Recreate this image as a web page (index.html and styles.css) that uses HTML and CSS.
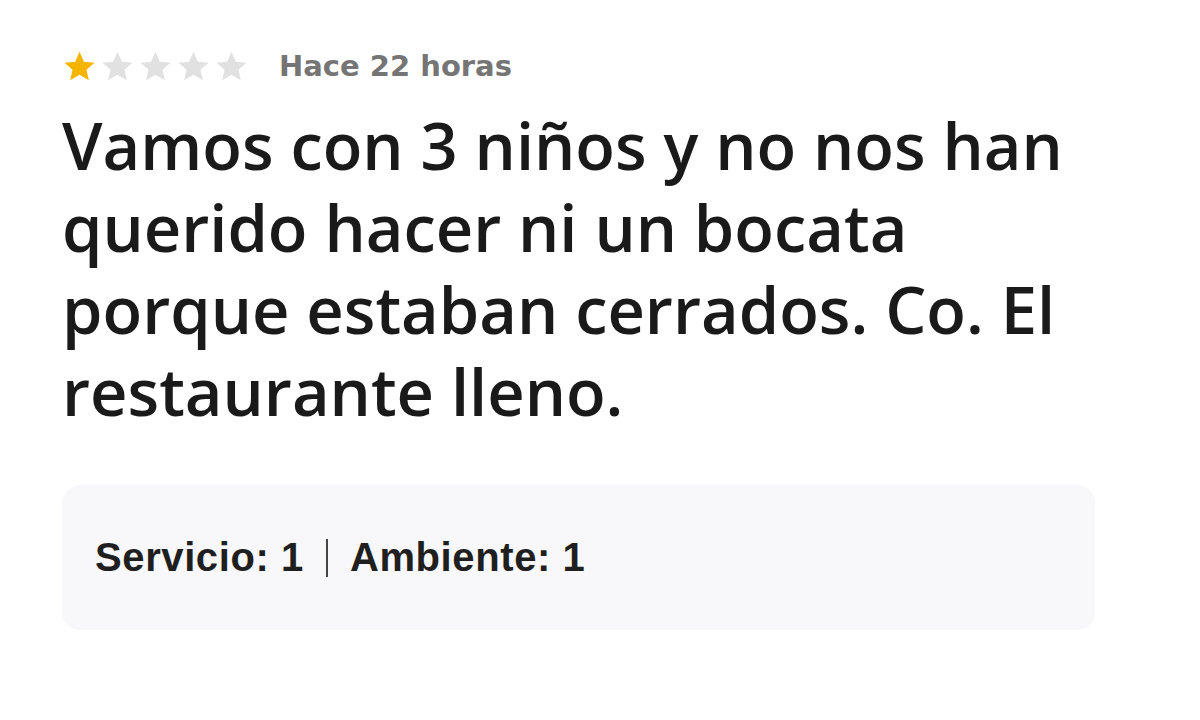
FILE: index.html
```html
<!DOCTYPE html>
<html lang="es">
<head>
  <meta charset="UTF-8">
  <meta name="viewport" content="width=device-width, initial-scale=1.0">
  <title>Reseña</title>
  <link rel="stylesheet" href="styles.css">
</head>
<body>
<div class="review">
  <div class="review-head">
    <div class="stars">
      <svg class="star on" viewBox="0 0 24 24"><path d="M12 1.8l3 6.9 7.3.7-5.5 4.9 1.6 7.2L12 17.7l-6.4 3.8 1.6-7.2-5.5-4.9 7.3-.7z"/></svg>
      <svg class="star" viewBox="0 0 24 24"><path d="M12 1.8l3 6.9 7.3.7-5.5 4.9 1.6 7.2L12 17.7l-6.4 3.8 1.6-7.2-5.5-4.9 7.3-.7z"/></svg>
      <svg class="star" viewBox="0 0 24 24"><path d="M12 1.8l3 6.9 7.3.7-5.5 4.9 1.6 7.2L12 17.7l-6.4 3.8 1.6-7.2-5.5-4.9 7.3-.7z"/></svg>
      <svg class="star" viewBox="0 0 24 24"><path d="M12 1.8l3 6.9 7.3.7-5.5 4.9 1.6 7.2L12 17.7l-6.4 3.8 1.6-7.2-5.5-4.9 7.3-.7z"/></svg>
      <svg class="star" viewBox="0 0 24 24"><path d="M12 1.8l3 6.9 7.3.7-5.5 4.9 1.6 7.2L12 17.7l-6.4 3.8 1.6-7.2-5.5-4.9 7.3-.7z"/></svg>
    </div>
    <span class="time">Hace 22 horas</span>
  </div>
  <p class="text">Vamos con 3 niños y no nos han querido hacer ni un bocata porque estaban cerrados. Co. El restaurante lleno.</p>
  <div class="ratings">
    <span>Servicio: 1</span>
    <span class="sep"></span>
    <span>Ambiente: 1</span>
  </div>
</div>
</body>
</html>
```

FILE: styles.css
```css
* {
  margin: 0;
  padding: 0;
  box-sizing: border-box;
}
body {
  background-color: #fff;
  color: #1a1a1a;
  font-family: "Open Sans", Arial, sans-serif;
}
.review {
  padding: 49px 0 0 62px;
}
.review-head {
  display: flex;
  align-items: center;
  gap: 30px;
  height: 34px;
}
.stars {
  display: flex;
  gap: 3px;
}
.star {
  width: 35px;
  height: 35px;
  fill: #e1e1e1;
}
.star.on {
  fill: #f4b400;
}
.time {
  font-family: "DejaVu Sans", sans-serif;
  font-weight: bold;
  font-size: 29px;
  line-height: 34px;
  color: #757575;
}
.text {
  margin-top: 21px;
  font-size: 65px;
  font-weight: 600;
  line-height: 82px;
  max-width: 1060px;
}
.ratings {
  margin-top: 53px;
  width: 1033px;
  height: 145px;
  background-color: #f8f8fa;
  border-radius: 18px;
  display: flex;
  align-items: center;
  padding-left: 33px;
  gap: 22px;
  font-family: "Liberation Sans", Arial, sans-serif;
  font-weight: bold;
  font-size: 40px;
  letter-spacing: 0.6px;
  color: #1f1f1f;
}
.sep {
  width: 2px;
  height: 38px;
  background-color: #444;
}
```
